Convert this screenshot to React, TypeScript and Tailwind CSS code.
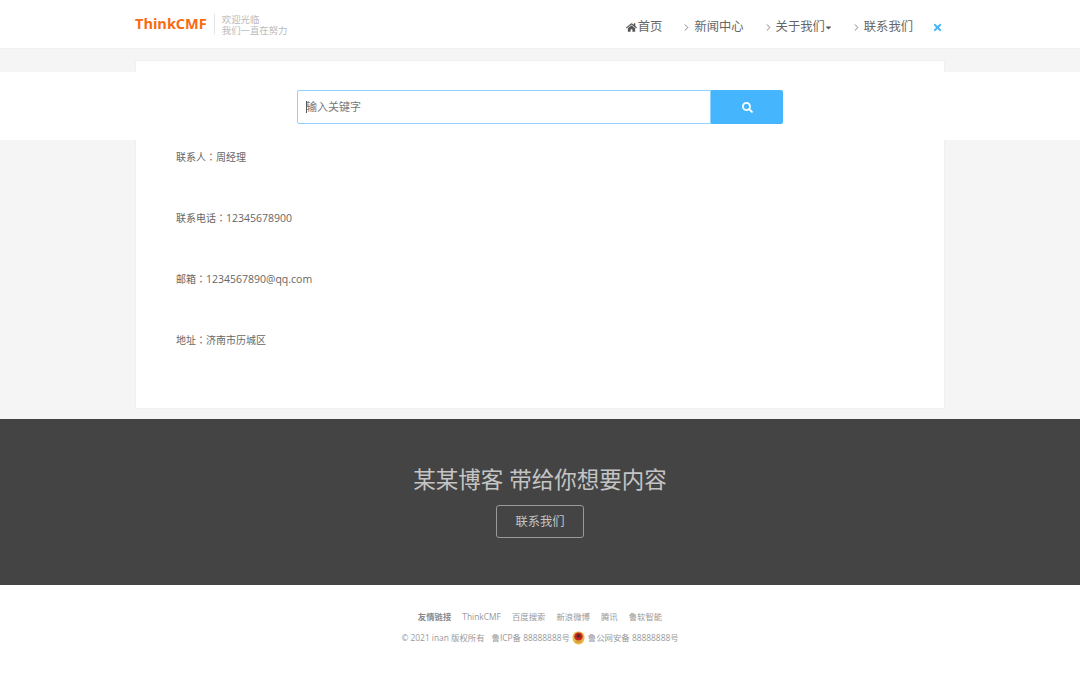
import { FaHome, FaTimes, FaSearch, FaCaretDown } from "react-icons/fa";
import { ChevronRight } from "lucide-react";

const font = { fontFamily: '"Open Sans","Noto Sans CJK SC",sans-serif' };

function NavItem({ label, caret }: { label: string; caret?: boolean }) {
  return (
    <a className="flex items-center text-[12.3px] text-[#666]">
      <ChevronRight size={11} strokeWidth={1.75} className="mr-[2px] text-[#666]" />
      <span>{label}</span>
      {caret && <FaCaretDown className="w-[7px] text-[9px] text-[#555]" />}
    </a>
  );
}

function Badge() {
  return (
    <svg width="13" height="14" viewBox="0 0 13 14" className="mx-[2px]">
      <path d="M6.5 0.5 C10 0.5 12.5 2.5 12.5 6.5 C12.5 10.5 10 13.5 6.5 13.5 C3 13.5 0.5 10.5 0.5 6.5 C0.5 2.5 3 0.5 6.5 0.5Z" fill="#e8b94a" />
      <circle cx="6.5" cy="5.6" r="4.2" fill="#c8261f" />
      <circle cx="6.5" cy="5" r="2" fill="#5a2a2a" />
      <path d="M3 11 C5 12.4 8 12.4 10 11 L9 9.6 H4Z" fill="#d9a13a" />
    </svg>
  );
}

function Info({ label, value, small }: { label: string; value: string; small?: boolean }) {
  return (
    <p className="text-[10px] leading-[14px] text-[#666]">
      {label}
      <span className="[font-family:'Noto_Sans_CJK_TC']">：</span>
      <span className={small ? "" : "text-[10.5px]"}>{value}</span>
    </p>
  );
}

export default function App() {
  return (
    <div style={font} className="relative min-h-[686px] bg-[#f5f5f5]">
      <header className="flex h-[49px] items-center justify-between border-b border-[#f0f0f0] bg-white pl-[135px] pr-[137px]">
        <div className="flex items-center">
          <span className="text-[14.5px] font-bold text-[#f96a10]">ThinkCMF</span>
          <div className="ml-[7px] mr-[7px] h-[20px] w-px bg-[#e5e5e5]" />
          <div className="pt-[2px] text-[9.4px] leading-[11px] text-[#bbbbbb]">
            <div>欢迎光临</div>
            <div>我们一直在努力</div>
          </div>
        </div>
        <nav className="flex items-center gap-[19px] pt-[6px]">
          <a className="flex items-center text-[12.3px] text-[#666]">
            <FaHome className="mr-[1px] text-[11px] text-[#555]" />
            <span>首页</span>
          </a>
          <NavItem label="新闻中心" />
          <NavItem label="关于我们" caret />
          <NavItem label="联系我们" />
          <FaTimes className="text-[11px] text-[#45b6fd]" />
        </nav>
      </header>

      <div className="absolute left-0 right-0 top-[72px] flex h-[68px] items-center justify-center bg-white pt-[2px]">
        <div className="flex h-[34px] w-[486px]">
          <div className="flex flex-1 items-center rounded-l-[2px] border border-[#8fd3fd] pl-[8px] text-[11px] text-[#777]">
            <span className="mr-[-1px] h-[12px] w-px bg-[#555]" />
            输入关键字
          </div>
          <div className="flex w-[72px] items-center justify-center rounded-r-[2px] bg-[#45b6fd] text-white">
            <FaSearch className="text-[11px]" />
          </div>
        </div>
      </div>

      <main className="mx-[135px] mt-[11px] h-[349px] rounded-t-[2px] border border-[#f0f0f0] bg-white pl-[40px] pt-[89px]">
        <div className="flex flex-col gap-[47px]">
          <Info label="联系人" value="周经理" small />
          <Info label="联系电话" value="12345678900" />
          <Info label="邮箱" value="1234567890@qq.com" />
          <Info label="地址" value="济南市历城区" small />
        </div>
      </main>

      <section className="mt-[10px] flex h-[166px] flex-col items-center bg-[#444444] pt-[45px]">
        <h2 className="text-[22.5px] leading-[32px] text-[#c4c4c4]">某某博客 带给你想要内容</h2>
        <a className="mt-[9px] flex h-[33px] w-[88px] items-center justify-center rounded-[3px] border border-[#999] pt-px text-[12.3px] text-[#c4c4c4]">
          联系我们
        </a>
      </section>

      <footer className="flex h-[101px] flex-col items-center bg-white pt-[25px] text-[8.4px] text-[#999]">
        <div className="flex h-[14px] items-center gap-[11px]">
          <span className="font-bold text-[#888]">友情链接</span>
          <span>ThinkCMF</span>
          <span>百度搜索</span>
          <span>新浪微博</span>
          <span>腾讯</span>
          <span>鲁软智能</span>
        </div>
        <div className="mt-[7px] flex h-[14px] items-center">
          <span>© 2021 inan 版权所有</span>
          <span className="ml-[7px]">鲁ICP备 88888888号</span>
          <Badge />
          <span className="ml-[1px]">鲁公网安备 88888888号</span>
        </div>
      </footer>
    </div>
  );
}
